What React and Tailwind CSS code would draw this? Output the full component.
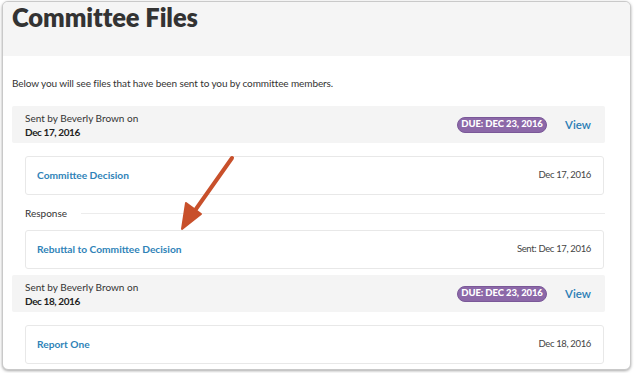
export default function App() {
  const font = { fontFamily: 'Lato, "Open Sans", sans-serif' };
  return (
    <div className="relative w-[634px] h-[373px] bg-white overflow-hidden" style={font}>
      <div className="ml-[2px] mt-[1px] w-[629px] h-[369px] border border-[#c9c9c9] rounded-[6px] shadow-[0_1px_3px_rgba(0,0,0,0.35)] overflow-hidden bg-white">
        <div className="h-[54px] bg-[#f5f5f5] px-[9px] pt-[1px]">
          <h1 className="text-[25.5px] leading-[28px] font-extrabold text-[#333] tracking-[-0.1px]">Committee Files</h1>
        </div>

        <div className="pl-[9px] pr-[25px]">
          <p className="mt-[19px] text-[10px] leading-[16px] text-[#333] tracking-[-0.1px]">
            Below you will see files that have been sent to you by committee members.
          </p>

          <Section date="Dec 17, 2016" className="mt-[15px]" />

          <Card name="Committee Decision" date="Dec 17, 2016" className="mt-[13px]" />

          <div className="flex items-center ml-[13px] mt-[11px] h-[15px]">
            <span className="text-[10px] text-[#333]">Response</span>
            <div className="flex-1 ml-[14px] h-px bg-[#ececec]"></div>
          </div>

          <Card name="Rebuttal to Committee Decision" date="Sent: Dec 17, 2016" className="mt-[9px]" />

          <Section date="Dec 18, 2016" className="mt-[6px]" />

          <Card name="Report One" date="Dec 18, 2016" className="mt-[13px]" />
        </div>
      </div>

      <svg className="absolute left-0 top-0 pointer-events-none" width="634" height="373">
        <line x1="232" y1="158" x2="196" y2="209" stroke="#c8502b" strokeWidth="4" strokeLinecap="round" />
        <polygon points="182,229 186,203 201,214" fill="#c8502b" stroke="#c8502b" strokeWidth="2" strokeLinejoin="round" />
      </svg>
    </div>
  );
}

function Section({ date, className }) {
  return (
    <div className={`flex items-center h-[37px] bg-[#f4f4f4] rounded-[2px] pl-[13px] pr-[14px] ${className}`}>
      <div className="flex-1 text-[10px] leading-[14px] text-[#333]">
        <div>Sent by Beverly Brown on</div>
        <div className="font-bold text-[#222] text-[10px] tracking-[-0.4px]">{date}</div>
      </div>
      <span className="h-[16px] w-[90px] flex items-center justify-center rounded-full bg-[#8c68a8] border border-[#7a5898] text-white text-[9.5px] font-black tracking-[-0.1px]">
        DUE: DEC 23, 2016
      </span>
      <a className="ml-[18px] text-[11.5px] text-[#2a7db5] font-semibold">View</a>
    </div>
  );
}

function Card({ name, date, className }) {
  return (
    <div className={`flex items-center justify-between ml-[13px] mr-[1px] h-[39px] bg-white border border-[#e8e8e8] rounded-[3px] pl-[11px] pr-[12px] ${className}`}>
      <span className="text-[10.2px] font-bold text-[#2f83b8]">{name}</span>
      <span className="text-[9.5px] text-[#444] tracking-[-0.35px]">{date}</span>
    </div>
  );
}
